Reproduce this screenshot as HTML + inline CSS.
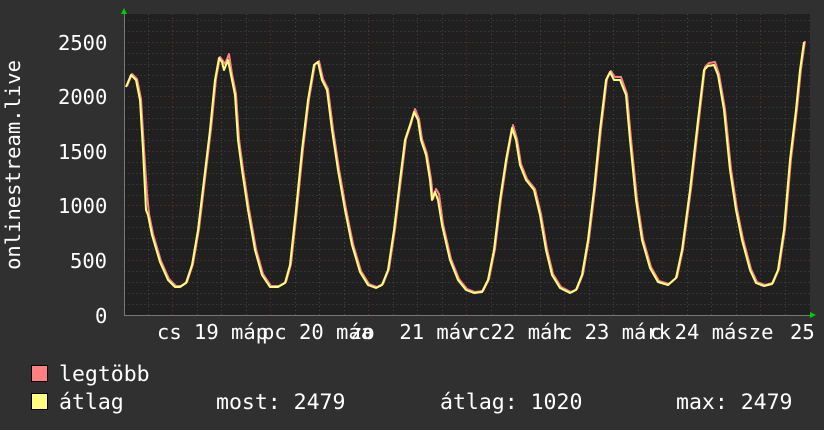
<!DOCTYPE html><html><head><meta charset="utf-8"><style>
body{margin:0;width:824px;height:430px;background:#303030;overflow:hidden;font-family:"DejaVu Sans Mono","Liberation Mono",monospace;color:#fff}
.t{position:absolute;font-size:20.5px;white-space:pre;line-height:1}
</style></head><body>
<svg width="824" height="430" style="position:absolute;left:0;top:0">
<rect x="124" y="14" width="686" height="301" fill="#202020"/>
<g stroke="#4a4a4a" stroke-dasharray="1,3" stroke-width="1">
<path d="M124.5 53.5H810M124.5 64.5H810M124.5 75.5H810M124.5 86.5H810M124.5 107.5H810M124.5 118.5H810M124.5 129.5H810M124.5 140.5H810M124.5 162.5H810M124.5 173.5H810M124.5 184.5H810M124.5 195.5H810M124.5 216.5H810M124.5 227.5H810M124.5 238.5H810M124.5 249.5H810M124.5 271.5H810M124.5 282.5H810M124.5 293.5H810M124.5 304.5H810M124.5 31.5H810M124.5 20.5H810"/>
<path d="M148.5 14V315M197.5 14V315M221.5 14V315M246.5 14V315M295.5 14V315M319.5 14V315M344.5 14V315M393.5 14V315M417.5 14V315M442.5 14V315M491.5 14V315M515.5 14V315M540.5 14V315M589.5 14V315M613.5 14V315M638.5 14V315M687.5 14V315M711.5 14V315M736.5 14V315M785.5 14V315"/>
</g>
<g stroke="#6a3030" stroke-dasharray="1,3" stroke-width="1">
<path d="M124.5 42.5H810M124.5 96.5H810M124.5 151.5H810M124.5 205.5H810M124.5 260.5H810"/>
<path d="M172.5 14V315M270.5 14V315M368.5 14V315M466.5 14V315M564.5 14V315M662.5 14V315M760.5 14V315"/>
</g>
<path d="M124.5 10V315.5H814" stroke="#777" fill="none"/>
<polygon points="121,14 127,14 124,8" fill="#0c0"/>
<polygon points="810,312 810,318 816,315" fill="#0c0"/>
<g fill="none" stroke-width="2" stroke-linejoin="round">
<polyline stroke="#ff8080" transform="translate(1,-1)" points="126,87 131,75 136,80 140,100 143,150 146,195 148,215 152,235 160,262 168,280 175,287 180,287 186,283 192,265 198,230 204,180 210,130 215,80 219,58 222,62 224,65 228,55 231,75 235,95 238,140 242,170 248,210 255,250 262,275 270,287 278,287 285,283 290,265 296,210 302,150 308,100 314,65 318,62 322,80 327,90 332,130 338,170 345,210 352,245 360,272 368,285 376,288 382,285 388,270 394,230 400,180 405,140 410,125 414,110 418,120 421,140 426,155 430,180 432,200 435,190 438,195 442,225 450,260 458,280 466,290 474,293 482,292 488,280 494,250 500,200 506,160 512,126 516,140 520,165 526,180 534,190 540,215 546,250 552,275 560,288 570,293 576,290 582,275 588,240 594,190 600,130 606,80 610,72 614,78 620,78 626,95 630,140 636,200 642,240 650,268 658,282 668,285 676,278 682,250 690,190 698,120 704,68 708,64 714,63 718,75 724,110 730,170 736,210 742,240 750,270 756,283 764,286 772,284 778,270 784,230 790,160 796,110 800,70 804,42"/>
<polyline stroke="#ffff80" points="126,87 131,75 136,80 140,100 143,150 146,210 148,215 152,235 160,262 168,280 175,287 180,287 186,283 192,265 198,230 204,180 210,130 215,80 219,58 222,62 224,70 228,60 231,75 235,95 238,140 242,170 248,210 255,250 262,275 270,287 278,287 285,283 290,265 296,210 302,150 308,100 314,65 318,62 322,80 327,90 332,130 338,170 345,210 352,245 360,272 368,285 376,288 382,285 388,270 394,230 400,180 405,140 410,125 414,112 418,120 421,140 426,155 430,180 432,200 435,192 438,200 442,225 450,260 458,280 466,290 474,293 482,292 488,280 494,250 500,200 506,160 512,128 516,140 520,165 526,180 534,190 540,215 546,250 552,275 560,288 570,293 576,290 582,275 588,240 594,190 600,130 606,80 610,72 614,80 620,80 626,95 630,140 636,200 642,240 650,268 658,282 668,285 676,278 682,250 690,190 698,120 704,70 708,66 714,65 718,75 724,110 730,170 736,210 742,240 750,270 756,283 764,286 772,284 778,270 784,230 790,160 796,110 800,70 804,42"/>
</g>
<rect x="31.5" y="365.5" width="16" height="16" fill="#ff8080" stroke="#000"/>
<rect x="31.5" y="393.5" width="16" height="16" fill="#ffff80" stroke="#000"/>
<text x="14" y="165" transform="rotate(-90 14 165)" fill="#fff" font-size="20.5" text-anchor="middle" font-family="DejaVu Sans Mono,monospace" dominant-baseline="middle">onlinestream.live</text>
</svg>
<div class="t" style="left:58px;top:33px">2500</div>
<div class="t" style="left:58px;top:87px">2000</div>
<div class="t" style="left:58px;top:142px">1500</div>
<div class="t" style="left:58px;top:196px">1000</div>
<div class="t" style="left:70px;top:251px">500</div>
<div class="t" style="left:95px;top:306px">0</div>
<div class="t" style="left:157px;top:322px">cs 19 máp</div>
<div class="t" style="left:262px;top:322px">pc 20 máa</div>
<div class="t" style="left:350px;top:322px">zo  21 máv</div>
<div class="t" style="left:466px;top:322px">rc22 máh</div>
<div class="t" style="left:560px;top:322px">c 23 márk</div>
<div class="t" style="left:650px;top:322px">c 24 másze</div>
<div class="t" style="left:790px;top:322px">25</div>
<div class="t" style="left:59px;top:364px;font-size:21.5px">legtöbb</div>
<div class="t" style="left:59px;top:392px;font-size:21.5px">átlag</div>
<div class="t" style="left:216px;top:392px;font-size:21.5px">most: 2479</div>
<div class="t" style="left:440px;top:392px;font-size:21.5px">átlag: 1020</div>
<div class="t" style="left:676px;top:392px;font-size:21.5px">max: 2479</div>
</body></html>
